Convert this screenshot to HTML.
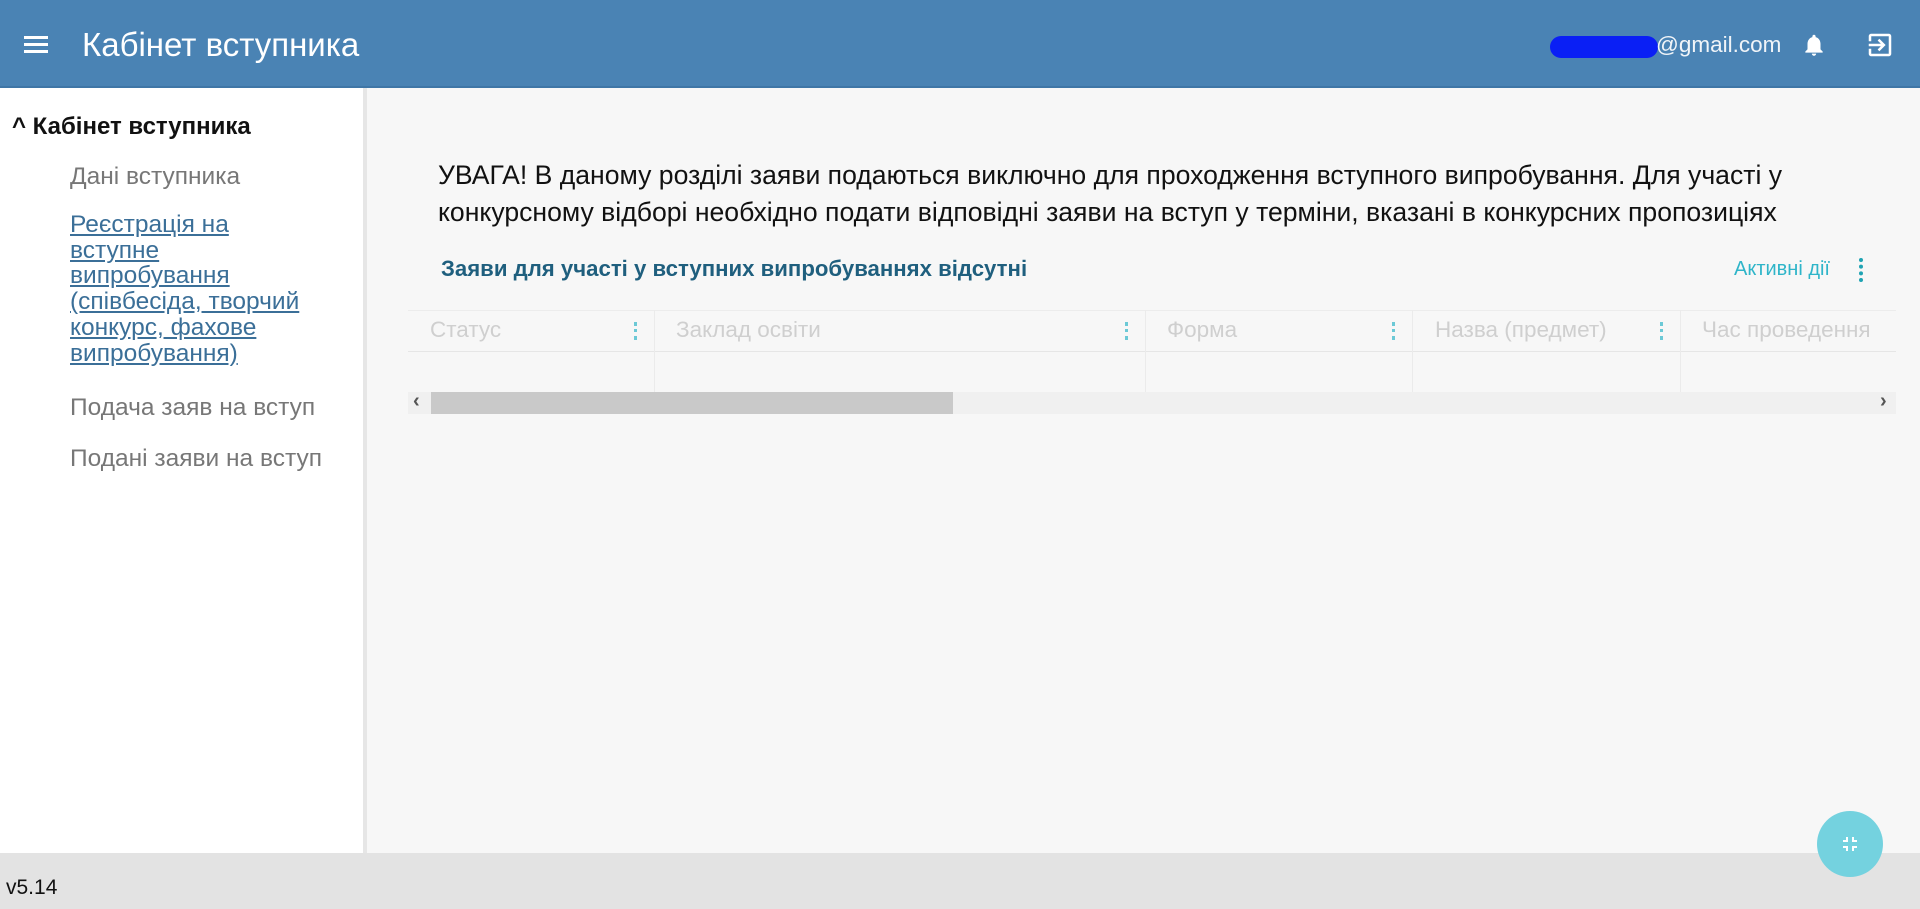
<!DOCTYPE html>
<html><head><meta charset="utf-8"><style>
*{margin:0;padding:0;box-sizing:border-box}
body{width:1920px;height:909px;overflow:hidden;background:#f7f7f7;font-family:"Liberation Sans",sans-serif;position:relative}
.hdr{position:absolute;left:0;top:0;width:1920px;height:88px;background:#4a83b4;border-bottom:2px solid #3f76a6}
.side{position:absolute;left:0;top:88px;width:367px;height:765px;background:#fff;border-right:4px solid #e6e6e6}
.foot{position:absolute;left:0;top:853px;width:1920px;height:56px;background:#e3e3e3}
.a{position:absolute;white-space:nowrap}
.th{position:absolute;top:317px;font-size:22.5px;color:#cfcfcf}
.cd{position:absolute;top:322px;width:3px;height:18px;border-left:3px dotted #6cc9d6}
.vl{position:absolute;top:310px;height:82px;border-left:1px solid #ebebeb}
</style></head><body>
<div class="hdr">
 <div class="a" style="left:24px;top:36px;width:24px;height:3px;background:#fff;box-shadow:0 7px 0 #fff,0 14px 0 #fff"></div>
 <div class="a" style="left:82px;top:26px;font-size:33px;color:#fff">Кабінет вступника</div>
 <div class="a" style="left:1550px;top:36px;width:108px;height:22px;border-radius:11px;background:#0a1ff5"></div>
 <div class="a" style="left:1656px;top:32px;font-size:22.5px;color:#f0f4f8">@gmail.com</div>
 <svg class="a" style="left:1801px;top:31px" width="26" height="28" viewBox="0 0 24 24"><path fill="#fff" d="M12 22c1.1 0 2-.9 2-2h-4c0 1.1.9 2 2 2zm6-6v-5c0-3.070-1.63-5.64-4.5-6.32V4c0-.83-.67-1.5-1.5-1.5s-1.5.67-1.5 1.5v.68C7.64 5.36 6 7.92 6 11v5l-2 2v1h16v-1l-2-2z"/></svg>
 <svg class="a" style="left:1865px;top:30px" width="30" height="30" viewBox="0 0 24 24"><path fill="#fff" d="M10.09 15.59L11.5 17l5-5-5-5-1.41 1.41L12.67 11H3v2h9.67l-2.58 2.59zM19 3H5c-1.11 0-2 .9-2 2v4h2V5h14v14H5v-4H3v4c0 1.1.89 2 2 2h14c1.1 0 2-.9 2-2V5c0-1.1-.9-2-2-2z"/></svg>
</div>
<div class="side">
 <div class="a" style="left:12px;top:25px;font-size:24px;font-weight:bold;color:#111">^ Кабінет вступника</div>
 <div class="a" style="left:70px;top:75px;font-size:24.5px;color:#777">Дані вступника</div>
 <div class="a" style="left:70px;top:124px;font-size:24.5px;line-height:25.7px;color:#3b6f98;text-decoration:underline;white-space:normal;width:300px">Реєстрація на<br>вступне<br>випробування<br>(співбесіда, творчий<br>конкурс, фахове<br>випробування)</div>
 <div class="a" style="left:70px;top:306px;font-size:24.5px;color:#777">Подача заяв на вступ</div>
 <div class="a" style="left:70px;top:357px;font-size:24.5px;color:#777">Подані заяви на вступ</div>
</div>
<div class="a" style="left:438px;top:157px;font-size:26.6px;line-height:37px;color:#111">УВАГА! В даному розділі заяви подаються виключно для проходження вступного випробування. Для участі у<br>конкурсному відборі необхідно подати відповідні заяви на вступ у терміни, вказані в конкурсних пропозиціях</div>
<div class="a" style="left:441px;top:256px;font-size:22.2px;font-weight:bold;color:#1f5f7e">Заяви для участі у вступних випробуваннях відсутні</div>
<div class="a" style="left:1734px;top:258px;font-size:20px;color:#2fb5c9">Активні дії</div>
<div class="a" style="left:1859px;top:258px;width:4px;height:24px;border-left:4px dotted #1fa3b3"></div>
<div class="a" style="left:408px;top:310px;width:1488px;height:104px;background:#f7f7f7;border-top:1px solid #ececec"></div>
<div class="a" style="left:408px;top:351px;width:1488px;border-top:1px solid #e6e6e6"></div>
<div class="a" style="left:408px;top:392px;width:1488px;height:22px;background:#f0f0f0"></div>
<div class="a" style="left:431px;top:392px;width:522px;height:22px;background:#c9c9c9"></div>
<div class="a" style="left:413px;top:390px;font-size:20px;font-weight:bold;color:#555">‹</div>
<div class="a" style="left:1880px;top:390px;font-size:20px;font-weight:bold;color:#555">›</div>
<div class="vl" style="left:654px"></div><div class="vl" style="left:1145px"></div><div class="vl" style="left:1412px"></div><div class="vl" style="left:1680px"></div>
<div class="th" style="left:430px">Статус</div><div class="cd" style="left:634px"></div>
<div class="th" style="left:676px">Заклад освіти</div><div class="cd" style="left:1125px"></div>
<div class="th" style="left:1167px">Форма</div><div class="cd" style="left:1392px"></div>
<div class="th" style="left:1435px">Назва (предмет)</div><div class="cd" style="left:1660px"></div>
<div class="th" style="left:1702px">Час проведення</div>
<div class="foot"><div class="a" style="left:6px;top:23px;font-size:21px;color:#111">v5.14</div></div>
<div class="a" style="left:1817px;top:811px;width:66px;height:66px;border-radius:50%;background:#74d2df"></div>
<svg class="a" style="left:1838px;top:832px" width="24" height="24" viewBox="0 0 24 24"><path fill="#fff" d="M5 16h3v3h2v-5H5v2zm3-8H5v2h5V5H8v3zm6 11h2v-3h3v-2h-5v5zm2-11V5h-2v5h5V8h-3z"/></svg>
</body></html>
